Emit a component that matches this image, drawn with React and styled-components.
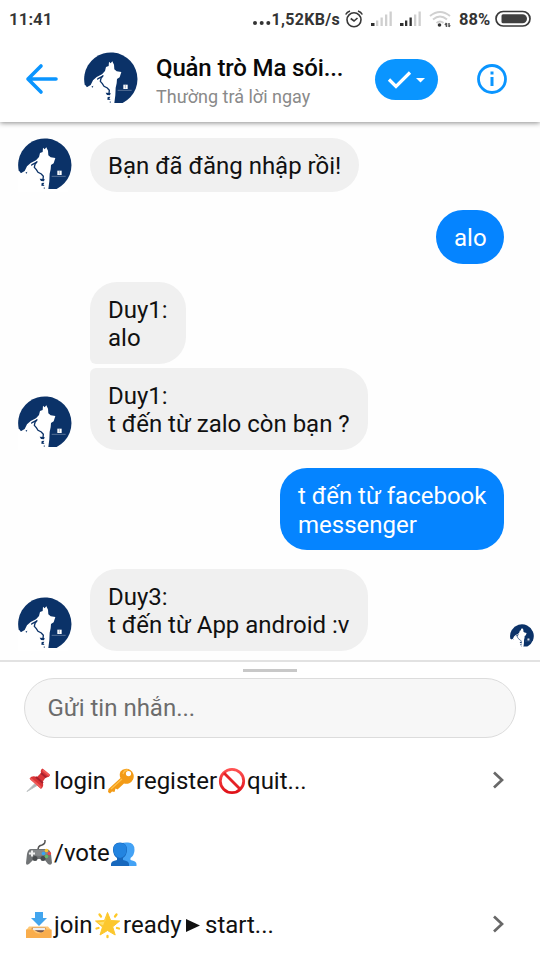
import React from 'react';
import styled, { createGlobalStyle } from 'styled-components';

const GlobalStyle = createGlobalStyle`
  * { box-sizing: border-box; }
  body { margin: 0; background: #fff; font-family: Roboto, "Noto Sans", sans-serif; color: #111; }
  svg { display: block; flex: none; }
`;

const Screen = styled.main`
  width: 540px;
  height: 960px;
  display: flex;
  flex-direction: column;
  overflow: hidden;
  background: #fefefe;
`;

const StatusBar = styled.div`
  height: 38px;
  flex: none;
  display: flex;
  align-items: center;
  padding: 0 9px 0 9px;
  background: #fff;
  color: #343434;
  font-size: 17px;
  font-weight: 700;
  z-index: 2;
`;

const Clock = styled.span`
  flex: 1;
  font-size: 17px;
  font-weight: 600;
`;

const Speed = styled.span`
  font-size: 16px;
  letter-spacing: 0.3px;
`;

const Percent = styled.span`
  font-size: 16.5px;
  width: 34px;
`;

const Header = styled.header`
  height: 84px;
  flex: none;
  display: flex;
  align-items: center;
  padding: 0 32px 2px 25px;
  background: #fff;
  box-shadow: 0 1px 5px rgba(0, 0, 0, 0.45);
  z-index: 1;
`;

const HeaderAvatar = styled.div`
  margin-left: 25px;
`;

const Titles = styled.div`
  flex: 1;
  margin-left: 18px;
  white-space: nowrap;
`;

const Title = styled.div`
  font-size: 24px;
  line-height: 29px;
  font-weight: 500;
  color: #090909;
  letter-spacing: -0.15px;
  margin-top: 5px;
`;

const Subtitle = styled.div`
  font-size: 18px;
  line-height: 27px;
  color: #8a8a8a;
`;

const CheckButton = styled.button`
  width: 63px;
  height: 41px;
  border: 0;
  padding: 0;
  border-radius: 21px;
  background: #0a95ff;
  margin-right: 38px;
`;

const Thread = styled.section`
  height: 538px;
  flex: none;
  display: flex;
  flex-direction: column;
  gap: 18px;
  padding: 16px 36px 0 18px;
`;

const Incoming = styled.div`
  display: flex;
  align-items: flex-end;
  gap: 18px;
`;

const Stack = styled.div`
  display: flex;
  flex-direction: column;
  align-items: flex-start;
  gap: 4px;
`;

const corners = {
  all: '27px',
  top: '27px 27px 27px 6px',
  bottom: '6px 27px 27px 27px',
};

const Bubble = styled.div`
  width: ${(p) => p.$w}px;
  height: ${(p) => (p.$single ? 54 : 82)}px;
  padding: 14px 0 0 18px;
  border-radius: ${(p) => corners[p.$shape || 'all']};
  background: ${(p) => (p.$own ? '#0584ff' : '#f0f0f0')};
  color: ${(p) => (p.$own ? '#fff' : '#111')};
  align-self: ${(p) => (p.$own ? 'flex-end' : 'flex-start')};
  font-size: 24px;
  line-height: ${(p) => (p.$own ? 28.5 : 28)}px;
  white-space: pre;
`;

const LastRow = styled.div`
  display: flex;
  justify-content: space-between;
  align-items: flex-end;
  margin: 1px -30px 0 0;
`;

const Seen = styled.div`
  margin-bottom: 3px;
`;

const Composer = styled.section`
  flex: 1;
  border-top: 2px solid #e2e2e2;
  background: #fff;
`;

const Handle = styled.div`
  width: 54px;
  height: 3px;
  margin: 7px auto 0;
  background: #c8c8c8;
`;

const Input = styled.div`
  height: 60px;
  margin: 6px 24px 7px;
  padding-left: 22.5px;
  border: 1.5px solid #dcdcdc;
  border-radius: 30px;
  background: #f7f7f7;
  color: #6c6c6c;
  font-size: 24px;
  line-height: 59px;
`;

const MenuRow = styled.div`
  height: 72px;
  display: flex;
  align-items: center;
  padding: 0 35px 0 25px;
  font-size: 24px;
  white-space: pre;
`;

const Word = styled.span`
  width: ${(p) => p.$w}px;
  padding-left: 1px;
`;

const Spacer = styled.span`
  flex: 1;
`;

function Avatar({ size = 54 }) {
  return (
    <svg width={size} height={size} viewBox="0 0 162 162">
      <path fill="#0b3268" d="M2 97A80 80 0 1 1 116 153H45Z" />
      <path fill="#fff" d="M0 110 6 107 20 99 27 85 38 75 54 67 63 57 66 45 74 42 75 29 80 34 85 28 90 38 91 52 98 58 112 60 107 76 99 81 98 94 95 107 94 130 91 153 89 162H0z" />
      <path fill="none" stroke="#0b3268" strokeWidth="4" d="m58 70-7 9-2 9 6 7 5 8 10 5 6 7-1 10" />
      <path fill="#0b3268" d="m40 79 17-9-5 7-13 7zM65 122l15 1-2 7-9-1zM71 135l8-1-3 6 4 4-10-1zM22 104l6-3-2 6zM76 150l4-2v5z" />
      <path fill="#fff" d="M118 98h13v13h-13z" />
      <path stroke="#7b90ad" strokeWidth="2" d="M124 99v10M101 115h42" />
      <path fill="#fff" d="M90 153h60v9H90z" />
    </svg>
  );
}

const bars = [
  [0, 13],
  [5, 10.5],
  [9.5, 7.5],
  [14, 4.5],
  [18.5, 1.5],
];

function SignalIcon({ level }) {
  return (
    <svg width="22" height="18" viewBox="0 0 22 18">
      {bars.map(([x, y], i) => (
        <rect key={x} x={x} y={y} width={i ? 2.3 : 3.5} height={16 - y} fill={i < level ? '#303030' : '#cfcfcf'} />
      ))}
    </svg>
  );
}

function StatusIcons() {
  return (
    <>
      <svg width="20" height="20" viewBox="0 0 20 20" fill="none" stroke="#383838" strokeWidth="1.6">
        <circle cx="10" cy="10.8" r="7" />
        <path d="M6.7 9.5 10 12l3.5-3M1.7 5.5Q3 3 6 2M14 2q3 1 4.3 3.5" />
      </svg>
      <svg width="7" height="20" />
      <SignalIcon level={1} />
      <svg width="7" height="20" />
      <SignalIcon level={3} />
      <svg width="7" height="20" />
      <svg width="22" height="20" viewBox="0 0 22 20" fill="none" stroke="#d0d0d0" strokeWidth="2">
        <path d="M1 7Q11-1 21 7M4 10.5q7-6 14 0M7.5 14q3.5-3 7 0" />
        <circle cx="10.5" cy="16" r="1.8" fill="#333" stroke="none" />
        <path stroke="#555" strokeWidth="1.5" d="M17.5 14v4m0-4-1.5 2M20 14v4m0 0 1-2" />
      </svg>
    </>
  );
}

function BatteryIcon() {
  return (
    <svg width="36" height="18" viewBox="0 0 36 18">
      <rect x="1" y="1.5" width="34" height="14.5" rx="7.2" fill="#fff" stroke="#3a3a3a" strokeWidth="1.7" />
      <path d="M8 4.3H27.5a4.5 4.5 0 0 1 0 9H8A1.5 1.5 0 0 1 6.5 11.800V5.800A1.500 1.500 0 0 1 8 4.300z" fill="#404040" />
    </svg>
  );
}

function PinIcon() {
  return (
    <svg width="28" height="28" viewBox="0 0 28 28">
      <path d="m2 24.500 8-8 2 2z" fill="#aeb4b5" stroke="#bcc1c2" />
      <path d="M4.500 11.500Q7 8 12 10l4-4q-1-3 1.500-4.500L25 8q-1 3-4 2l-3.500 5q2 4-1.500 7Z" fill="#d93436" />
      <path d="m11 10 7 6M16 6l5.500 4.500" stroke="#a91f2c" strokeWidth="2" />
      <path d="m6 12 9.500 8M18.500 3.500 24 8" stroke="#f05a58" strokeWidth="2" strokeLinecap="round" />
    </svg>
  );
}

function KeyIcon() {
  return (
    <svg width="28" height="28" viewBox="0 0 28 28">
      <path fill="#f39b16" fillRule="evenodd" d="M13.500 4.500A7.500 7.500 0 1 1 17 16.500L10.500 22.500 8.500 21.500 7.500 25 5 24.500 3 26.500 1 25 1.500 22 13.500 11A7.500 7.500 0 0 1 13.500 4.500Zm8-.500a2.600 2.600 0 1 0 0 5.200A2.600 2.600 0 0 0 21.500 4Z" />
      <path d="M4 22 15 12M16 7q1-4 5-4" fill="none" stroke="#ffc04a" strokeWidth="1.300" />
    </svg>
  );
}

function ProhibitedIcon() {
  return (
    <svg width="28" height="28" viewBox="0 0 28 28" fill="none" strokeWidth="2.8">
      <defs><linearGradient id="red" x1="0" y1="0" x2="0" y2="1"><stop stopColor="#ff5252" /><stop offset="1" stopColor="#df1118" /></linearGradient></defs>
      <circle cx="14" cy="14" r="11.700" stroke="url(#red)" />
      <path d="m6 6 16 16" stroke="#e52227" />
    </svg>
  );
}

function GamepadIcon() {
  return (
    <svg width="28" height="28" viewBox="0 0 28 28">
      <path d="M13.500 12Q12 7 17 6q3.500-1 3-5" fill="none" stroke="#555" strokeWidth="1.5" />
      <path d="M6 10h15q4 0 5 5l1 9q-1 3-4 1l-4-5H9l-5 5q-3 2-3-1l1-9q1-5 4-5z" fill="#717476" />
      <path d="M7 11h14q3 1 4 4L14 17 3 15q1-3 4-4z" fill="#86898b" />
      <path d="M4 14.500h6M7 11.500v6" stroke="#eee" strokeWidth="2" />
      <circle cx="10" cy="19.500" r="2.500" fill="#484b4e" /><circle cx="18" cy="19.500" r="2.500" fill="#484b4e" />
      <circle cx="21.500" cy="11.500" r="1.800" fill="#fdc32c" /><circle cx="18.500" cy="14.500" r="1.800" fill="#36a5f4" /><circle cx="24.300" cy="14.500" r="1.800" fill="#f14a45" /><circle cx="21.500" cy="17.500" r="1.800" fill="#66bb6a" />
    </svg>
  );
}

function PeopleIcon() {
  return (
    <svg width="28" height="28" viewBox="0 0 28 28">
      <path d="M11 4.500Q14 3 18 3.500q6.500 0 6.500 7.500 0 5-4 8v2q6 1 6 4v2H13z" fill="#43a2f5" />
      <path d="M10 3.500q7 0 7 7.500 0 5-4 8v2q6 1 6 4v2H1v-2q0-3 6-4v-2q-4-3-4-8 0-7.500 7-7.500z" fill="#1768bd" />
      <path d="M10 4q6.500 0 6.500 6 0 8-6.500 9-6.500-1-6.500-9 0-6 6.500-6z" fill="#2384e0" />
    </svg>
  );
}

function InboxIcon() {
  return (
    <svg width="28" height="28" viewBox="0 0 28 28">
      <path d="M10 1h8v6h4l-8 8-8-8h4z" fill="#42a5ee" />
      <path d="M4 15.500h19l3.500 4V26H1v-6.500z" fill="#ffc875" />
      <path d="M7 16.500h13.500l1 2H6z" fill="#cf9564" />
      <path d="M8 18h12q-2 7-12 0z" fill="#77564b" />
      <path d="M8 17h12v2.200H8z" fill="#eee" />
      <path d="M1 18.500h7q2 4 6 4t6-4h6.500V27H1z" fill="#f9ad4c" />
    </svg>
  );
}

function StarIcon() {
  return (
    <svg width="28" height="28" viewBox="0 0 28 28">
      <path d="m5.500 3.500 1.500 2M22.500 3.500l-1.500 2M2.500 17.500l2-.500M25 17.500l-2-.500M13.500 25v1.200" stroke="#ffc928" strokeWidth="2.300" strokeLinecap="round" />
      <path d="m13.500 1.500 3.200 8 9 .500-7 5.800 2.500 8.200-7.700-4.500-7.500 4.500L8.500 16l-7-6 9-.500z" fill="#fcc72d" stroke="#fcc72d" strokeLinejoin="round" />
      <path d="m13.500 3-2.500 7.500-7.500 1 5.500 3z" fill="#ffe06a" />
    </svg>
  );
}

function Chevron() {
  return <svg width="14" height="22" viewBox="0 0 14 22"><path d="m3 2.500 8 7.500-8 7.500" fill="none" stroke="#686868" strokeWidth="2.700" /></svg>;
}

export default function App() {
  return (
    <>
      <GlobalStyle />
      <Screen>
        <StatusBar>
          <Clock>11:41</Clock>
          <svg width="20" height="20" viewBox="0 0 20 20" fill="#333"><circle cx="3" cy="14" r="2" /><circle cx="9.700" cy="14" r="2" /><circle cx="16.300" cy="14" r="2" /></svg>
          <Speed>1,52KB/s</Speed>
          <svg width="4" height="20" />
          <StatusIcons />
          <svg width="8" height="20" />
          <Percent>88%</Percent>
          <svg width="2" height="20" />
          <BatteryIcon />
        </StatusBar>
        <Header>
          <svg width="34" height="32" viewBox="0 0 34 32" fill="none" stroke="#0a95ff" strokeWidth="3.600" strokeLinecap="round" strokeLinejoin="round"><path d="M31 16H3M16 3 3 16l13 13" /></svg>
          <HeaderAvatar><Avatar /></HeaderAvatar>
          <Titles>
            <Title>Quản trò Ma sói...</Title>
            <Subtitle>Thường trả lời ngay</Subtitle>
          </Titles>
          <CheckButton>
            <svg width="63" height="41" viewBox="0 0 63 41" fill="none"><path d="m14 20.500 7 7 14-14" stroke="#fff" strokeWidth="3.200" /><path d="M41 19h9l-4.500 4.500z" fill="#fff" /></svg>
          </CheckButton>
          <svg width="32" height="32" viewBox="0 0 32 32"><circle cx="16" cy="16" r="13.500" fill="none" stroke="#0a95ff" strokeWidth="2.800" /><path d="M14.500 8.500h3v3h-3zm0 5.500h3v9h-3z" fill="#0a95ff" /></svg>
        </Header>
        <Thread>
          <Incoming><Avatar /><Bubble $w={269} $single>Bạn đã đăng nhập rồi!</Bubble></Incoming>
          <Bubble $w={68} $own $single>alo</Bubble>
          <Incoming>
            <Avatar />
            <Stack>
              <Bubble $w={96} $shape="top">{'Duy1:\nalo'}</Bubble>
              <Bubble $w={278} $shape="bottom">{'Duy1:\nt đến từ zalo còn bạn ?'}</Bubble>
            </Stack>
          </Incoming>
          <Bubble $w={224} $own>{'t đến từ facebook\nmessenger'}</Bubble>
          <LastRow>
            <Incoming><Avatar /><Bubble $w={278}>{'Duy3:\nt đến từ App android :v'}</Bubble></Incoming>
            <Seen><Avatar size={24} /></Seen>
          </LastRow>
        </Thread>
        <Composer>
          <Handle />
          <Input>Gửi tin nhắn...</Input>
          <MenuRow><PinIcon /><Word $w={54}>login</Word><KeyIcon /><Word $w={83}>register</Word><ProhibitedIcon /><Word>quit...</Word><Spacer /><Chevron /></MenuRow>
          <MenuRow><GamepadIcon /><Word $w={57}>/vote</Word><PeopleIcon /></MenuRow>
          <MenuRow><InboxIcon /><Word $w={41}>join</Word><StarIcon /><Word $w={62}>ready</Word><svg width="20" height="28" viewBox="0 0 20 28"><path d="m2 8 14 6.500L2 21z" fill="#111" /></svg><Word>start...</Word><Spacer /><Chevron /></MenuRow>
        </Composer>
      </Screen>
    </>
  );
}
